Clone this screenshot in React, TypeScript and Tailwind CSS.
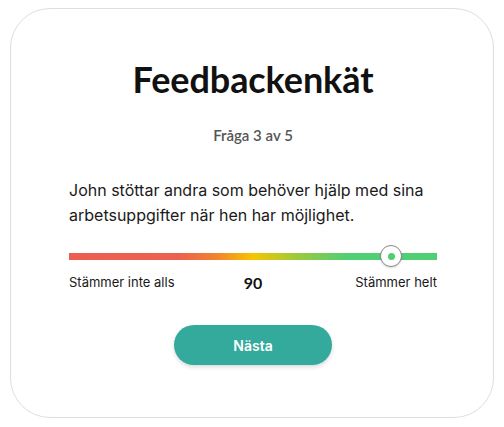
import React, { useState } from "react";

const Feedback = () => {
  const [value, setValue] = useState<number>(90);
  // thumb is 22px wide, so it travels within the track minus its own width
  const thumbLeft = `calc(${value / 100} * (100% - 22px))`;

  return (
    <div className="min-h-[427px] bg-white pt-2 pl-[10px] pr-[10px]">
      <div className="w-[484px] h-[410px] rounded-[40px] border border-[#dedede] bg-white pl-[58px] pr-[56px] pt-[48px] flex flex-col">
        <h1 className="text-center text-[36px] leading-[44px] font-bold tracking-[-0.1px] text-[#111] [font-family:Lato,'Noto_Sans',sans-serif]">
          Feedbackenkät
        </h1>
        <p className="mt-[24px] text-center text-[15px] leading-[20px] font-semibold text-[#555] [font-family:Lato,sans-serif]">
          Fråga 3 av 5
        </p>

        <p className="mt-[33px] text-[16px] leading-[25px] text-[#1a1a1a] [font-family:Inter,sans-serif]">
          John stöttar andra som behöver hjälp med sina arbetsuppgifter när hen har möjlighet.
        </p>

        <div className="relative mt-[17px] h-[22px] flex items-center">
          <div className="h-[7px] w-full bg-[linear-gradient(to_right,#ec5d52_0%,#ec6250_30%,#f2822f_40%,#f7c500_50%,#9cca3c_62%,#52cf72_75%,#4fcf74_100%)]" />
          <div
            className="absolute top-0 w-[22px] h-[22px] rounded-full bg-white border border-[#8a8a8a] shadow-[0_1px_2px_rgba(0,0,0,0.15)] flex items-center justify-center cursor-pointer"
            style={{ left: thumbLeft }}
            onClick={() => setValue(value)}
          >
            <div className="w-[7px] h-[7px] rounded-full bg-[#4fcf74]" />
          </div>
        </div>

        <div className="mt-[4px] flex items-center justify-between [font-family:Inter,sans-serif]">
          <span className="w-[120px] text-[13px] text-[#1a1a1a]">Stämmer inte alls</span>
          <span className="text-[16px] font-bold text-[#111] [font-family:Lato,sans-serif]">{value}</span>
          <span className="w-[120px] text-right text-[13px] text-[#1a1a1a]">Stämmer helt</span>
        </div>

        <div className="mt-[30px] flex justify-center">
          <button
            type="button"
            className="w-[158px] h-[40px] rounded-full bg-[#33aa9b] text-white text-[14px] font-semibold shadow-[0_2px_4px_rgba(0,0,0,0.15)] [font-family:Inter,sans-serif]"
          >
            Nästa
          </button>
        </div>
      </div>
    </div>
  );
};

export default function App() {
  return <Feedback />;
}
